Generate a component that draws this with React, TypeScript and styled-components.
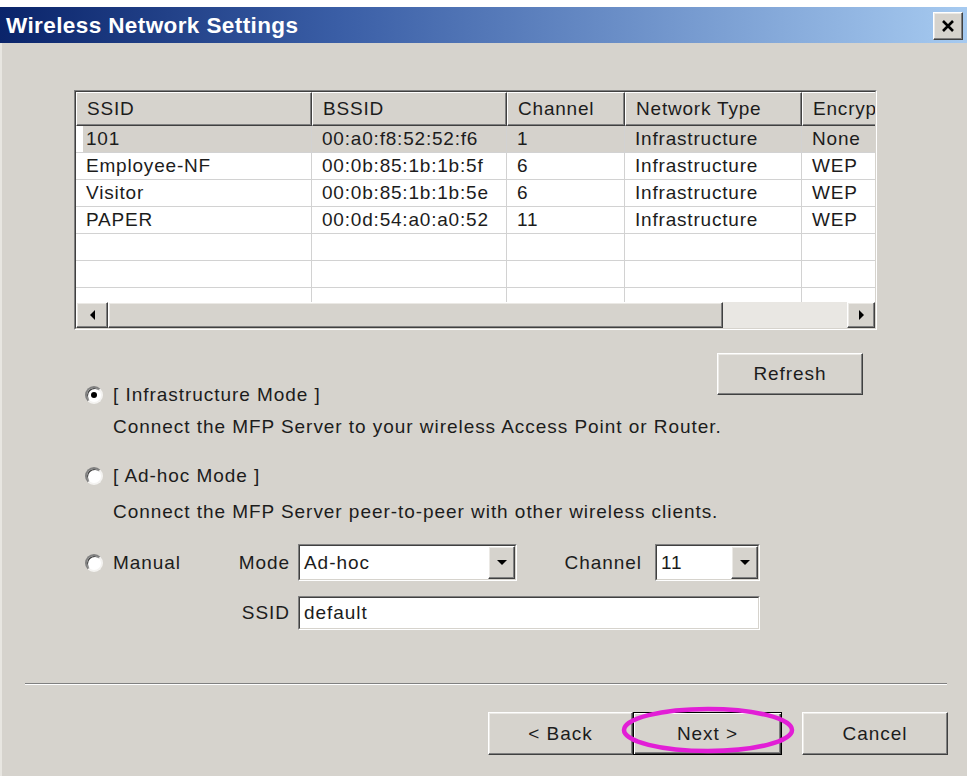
import type { FC, ReactNode } from 'react';
import styled, { createGlobalStyle, css } from 'styled-components';

const FACE = '#d6d3cd';
const SHADOW = '#808080';
const DARK = '#404040';
const LIGHT = '#ffffff';
const TEXT = '#1c1c1c';

const COLUMNS = '236px 195px 118px 177px 120px';

const networks = [
  { ssid: '101', bssid: '00:a0:f8:52:52:f6', channel: '1', type: 'Infrastructure', enc: 'None' },
  { ssid: 'Employee-NF', bssid: '00:0b:85:1b:1b:5f', channel: '6', type: 'Infrastructure', enc: 'WEP' },
  { ssid: 'Visitor', bssid: '00:0b:85:1b:1b:5e', channel: '6', type: 'Infrastructure', enc: 'WEP' },
  { ssid: 'PAPER', bssid: '00:0d:54:a0:a0:52', channel: '11', type: 'Infrastructure', enc: 'WEP' },
];

const GlobalStyle = createGlobalStyle`
  html, body {
    margin: 0;
    padding: 0;
    background: #fff;
  }
  body {
    font-family: "Liberation Sans", Arial, sans-serif;
    font-size: 19px;
    letter-spacing: 0.95px;
    color: ${TEXT};
  }
  * {
    box-sizing: border-box;
  }
`;

/* classic 3D bevels */
const raised = css`
  border: 1px solid;
  border-color: ${LIGHT} ${DARK} ${DARK} ${LIGHT};
  box-shadow: inset -1px -1px 0 ${SHADOW}, inset 1px 1px 0 #ebe9e5;
`;

const sunkenOuter = css`
  border: 1px solid;
  border-color: ${SHADOW} ${LIGHT} ${LIGHT} ${SHADOW};
`;

const sunkenInner = css`
  border: 1px solid;
  border-color: ${DARK} ${FACE} ${FACE} ${DARK};
`;

const Screen = styled.div`
  width: 971px;
  height: 776px;
  padding: 7px 4px 0 0;
  background: #fff;
`;

const Dialog = styled.div`
  height: 100%;
  display: flex;
  flex-direction: column;
  background: ${FACE};
  box-shadow: inset 2px 0 0 #e8e6e1;
`;

const TitleBar = styled.div`
  height: 36px;
  flex-shrink: 0;
  display: flex;
  align-items: center;
  justify-content: space-between;
  padding: 2px 4px 0 6px;
  background: linear-gradient(to right, #0a246a 0%, #3a5ea6 35%, #a6caf0 100%);
`;

const Title = styled.span`
  color: #fff;
  font-weight: bold;
  font-size: 22.5px;
  letter-spacing: 0.4px;
`;

const CloseButton = styled.button`
  width: 30px;
  height: 28px;
  padding: 0;
  display: flex;
  align-items: center;
  justify-content: center;
  background: ${FACE};
  ${raised};
`;

const Content = styled.div`
  display: flex;
  flex-direction: column;
  padding: 47px 0 0 74px;
`;

/* list view */
const ListFrame = styled.div`
  width: 803px;
  height: 240px;
  ${sunkenOuter};
`;

const ListBody = styled.div`
  height: 100%;
  display: flex;
  flex-direction: column;
  overflow: hidden;
  background: #fff;
  letter-spacing: 0.8px;
  ${sunkenInner};
`;

const HeaderRow = styled.div`
  display: grid;
  grid-template-columns: ${COLUMNS};
  flex-shrink: 0;
`;

const HeaderCell = styled.div`
  height: 34px;
  display: flex;
  align-items: center;
  padding-left: 10px;
  white-space: nowrap;
  overflow: hidden;
  background: ${FACE};
  border-top: 1px solid ${LIGHT};
  border-left: 1px solid ${LIGHT};
  border-right: 1px solid ${DARK};
  border-bottom: 1px solid ${DARK};
  box-shadow: inset -1px -1px 0 ${SHADOW};
`;

const Rows = styled.div`
  flex: 1;
  overflow: hidden;
`;

const Row = styled.div<{ $selected?: boolean }>`
  display: grid;
  grid-template-columns: ${COLUMNS};
  height: 27px;
  background: ${p => (p.$selected ? '#d5d2cc' : '#fff')};
`;

const Cell = styled.div<{ $lead?: boolean }>`
  height: 27px;
  line-height: 26px;
  padding-left: 10px;
  white-space: nowrap;
  overflow: hidden;
  border-right: 1px solid #d2d2d2;
  border-bottom: 1px solid #d2d2d2;
  ${p => p.$lead && 'background: linear-gradient(to right, #fff 7px, transparent 7px);'}
`;

const ScrollBar = styled.div`
  height: 26px;
  flex-shrink: 0;
  display: flex;
  background: #e9e7e3;
`;

const ScrollButton = styled.div<{ $width: number }>`
  width: ${p => p.$width}px;
  height: 26px;
  flex-shrink: 0;
  display: flex;
  align-items: center;
  justify-content: center;
  background: ${FACE};
  ${raised};
`;

const ScrollThumb = styled.div`
  width: 615px;
  height: 26px;
  background: ${FACE};
  ${raised};
`;

const Track = styled.div`
  flex: 1;
`;

const Arrow = styled.span<{ $dir: 'left' | 'right' | 'down' }>`
  width: 0;
  height: 0;
  ${p =>
    p.$dir === 'down'
      ? css`
          border-left: 5px solid transparent;
          border-right: 5px solid transparent;
          border-top: 5px solid #000;
        `
      : css`
          border-top: 5px solid transparent;
          border-bottom: 5px solid transparent;
          ${p.$dir === 'left' ? 'border-right' : 'border-left'}: 5px solid #000;
        `}
`;

/* mode selection */
const Options = styled.div`
  display: flex;
  flex-direction: column;
  margin: 23px 0 0 11px;
`;

const TopRow = styled.div`
  width: 778px;
  display: flex;
  align-items: flex-end;
`;

const RadioLabel = styled.label<{ $gap?: number }>`
  display: flex;
  align-items: center;
  gap: 10px;
  height: 32px;
  margin-top: ${p => p.$gap ?? 0}px;
  white-space: nowrap;
`;

const RadioCircle = styled.span<{ $checked?: boolean }>`
  width: 18px;
  height: 18px;
  flex-shrink: 0;
  border-radius: 50%;
  display: flex;
  align-items: center;
  justify-content: center;
  background: #fff;
  border: 2px solid;
  border-color: ${SHADOW} #f4f3f1 #f4f3f1 ${SHADOW};
  box-shadow: inset 1px 1px 0 ${DARK};
  &::after {
    content: '';
    width: 6px;
    height: 6px;
    border-radius: 50%;
    background: ${p => (p.$checked ? '#000' : 'transparent')};
  }
`;

const Description = styled.div<{ $gap?: number }>`
  height: 32px;
  line-height: 32px;
  margin-top: ${p => p.$gap ?? 0}px;
  padding-left: 28px;
  white-space: nowrap;
`;

const PushButton = styled.button<{ $width: number; $default?: boolean }>`
  width: ${p => p.$width}px;
  height: 43px;
  padding: 0;
  font: inherit;
  letter-spacing: inherit;
  color: ${TEXT};
  background: ${FACE};
  ${raised};
  ${p =>
    p.$default &&
    css`
      border: 1px solid #000;
      box-shadow: inset 1px 1px 0 ${LIGHT}, inset -1px -1px 0 ${DARK}, inset -2px -2px 0 ${SHADOW};
    `}
`;

const RefreshButton = styled(PushButton)`
  height: 42px;
  margin: 0 0 16px auto;
`;

const ManualGrid = styled.div`
  display: grid;
  grid-template-columns: 152px 61px 219px 138px 105px;
  grid-template-rows: 37px 34px;
  row-gap: 15px;
  align-items: center;
  margin-top: 16.5px;
`;

const FieldLabel = styled.span<{ $pad: number }>`
  text-align: right;
  padding-right: ${p => p.$pad}px;
  white-space: nowrap;
`;

const FieldFrame = styled.div<{ $span?: number }>`
  height: 100%;
  grid-column: ${p => (p.$span ? `span ${p.$span}` : 'auto')};
  ${sunkenOuter};
`;

const FieldInner = styled.div`
  height: 100%;
  display: flex;
  align-items: center;
  padding-left: 4px;
  background: #fff;
  ${sunkenInner};
`;

const FieldValue = styled.span`
  flex: 1;
  white-space: nowrap;
`;

const DropButton = styled.div`
  width: 27px;
  height: 100%;
  display: flex;
  align-items: center;
  justify-content: center;
  background: ${FACE};
  ${raised};
`;

/* footer */
const Footer = styled.div`
  margin-top: 53px;
  padding: 0 19px 0 25px;
`;

const Separator = styled.div`
  height: 2px;
  margin-right: 1px;
  border-top: 1px solid ${SHADOW};
  border-bottom: 1px solid ${LIGHT};
`;

const ButtonRow = styled.div`
  display: flex;
  justify-content: flex-end;
  margin-top: 27px;
`;

const Highlighted = styled.div`
  position: relative;
  margin-right: 20px;
`;

const Ring = styled.svg`
  position: absolute;
  left: -12px;
  top: -6px;
  pointer-events: none;
`;

const Radio: FC<{ checked?: boolean; gap?: number; children: ReactNode }> = ({ checked, gap, children }) => (
  <RadioLabel $gap={gap}>
    <RadioCircle $checked={checked} />
    {children}
  </RadioLabel>
);

const Combo: FC<{ value: string }> = ({ value }) => (
  <FieldFrame>
    <FieldInner>
      <FieldValue>{value}</FieldValue>
      <DropButton>
        <Arrow $dir="down" />
      </DropButton>
    </FieldInner>
  </FieldFrame>
);

const App: FC = () => (
  <Screen>
    <GlobalStyle />
    <Dialog>
      <TitleBar>
        <Title>Wireless Network Settings</Title>
        <CloseButton aria-label="Close">
          <svg width="14" height="12" viewBox="0 0 14 12">
            <path d="M2 1 L12 11 M12 1 L2 11" stroke="#000" strokeWidth="2.6" />
          </svg>
        </CloseButton>
      </TitleBar>

      <Content>
        <ListFrame>
          <ListBody>
            <HeaderRow>
              <HeaderCell>SSID</HeaderCell>
              <HeaderCell>BSSID</HeaderCell>
              <HeaderCell>Channel</HeaderCell>
              <HeaderCell>Network Type</HeaderCell>
              <HeaderCell>Encryption</HeaderCell>
            </HeaderRow>
            <Rows>
              {networks.map((n, i) => (
                <Row key={n.bssid} $selected={i === 0}>
                  <Cell $lead={i === 0}>{n.ssid}</Cell>
                  <Cell>{n.bssid}</Cell>
                  <Cell>{n.channel}</Cell>
                  <Cell>{n.type}</Cell>
                  <Cell>{n.enc}</Cell>
                </Row>
              ))}
              {[0, 1, 2].map(i => (
                <Row key={`empty-${i}`}>
                  <Cell />
                  <Cell />
                  <Cell />
                  <Cell />
                  <Cell />
                </Row>
              ))}
            </Rows>
            <ScrollBar>
              <ScrollButton $width={32}>
                <Arrow $dir="left" />
              </ScrollButton>
              <ScrollThumb />
              <Track />
              <ScrollButton $width={28}>
                <Arrow $dir="right" />
              </ScrollButton>
            </ScrollBar>
          </ListBody>
        </ListFrame>

        <Options>
          <TopRow>
            <Radio checked>[ Infrastructure Mode ]</Radio>
            <RefreshButton $width={146}>Refresh</RefreshButton>
          </TopRow>
          <Description>Connect the MFP Server to your wireless Access Point or Router.</Description>

          <Radio gap={16.5}>[ Ad-hoc Mode ]</Radio>
          <Description $gap={4}>Connect the MFP Server peer-to-peer with other wireless clients.</Description>

          <ManualGrid>
            <Radio>Manual</Radio>
            <FieldLabel $pad={8}>Mode</FieldLabel>
            <Combo value="Ad-hoc" />
            <FieldLabel $pad={13}>Channel</FieldLabel>
            <Combo value="11" />

            <span />
            <FieldLabel $pad={8}>SSID</FieldLabel>
            <FieldFrame $span={3}>
              <FieldInner>
                <FieldValue>default</FieldValue>
              </FieldInner>
            </FieldFrame>
          </ManualGrid>
        </Options>
      </Content>

      <Footer>
        <Separator />
        <ButtonRow>
          <PushButton $width={145}>&lt; Back</PushButton>
          <Highlighted>
            <PushButton $width={149} $default>
              Next &gt;
            </PushButton>
            <Ring width="174" height="50" viewBox="0 0 174 50">
              <ellipse cx="87" cy="24" rx="84" ry="21" fill="none" stroke="#e21ed6" strokeWidth="4.5" />
            </Ring>
          </Highlighted>
          <PushButton $width={146}>Cancel</PushButton>
        </ButtonRow>
      </Footer>
    </Dialog>
  </Screen>
);

export default App;
